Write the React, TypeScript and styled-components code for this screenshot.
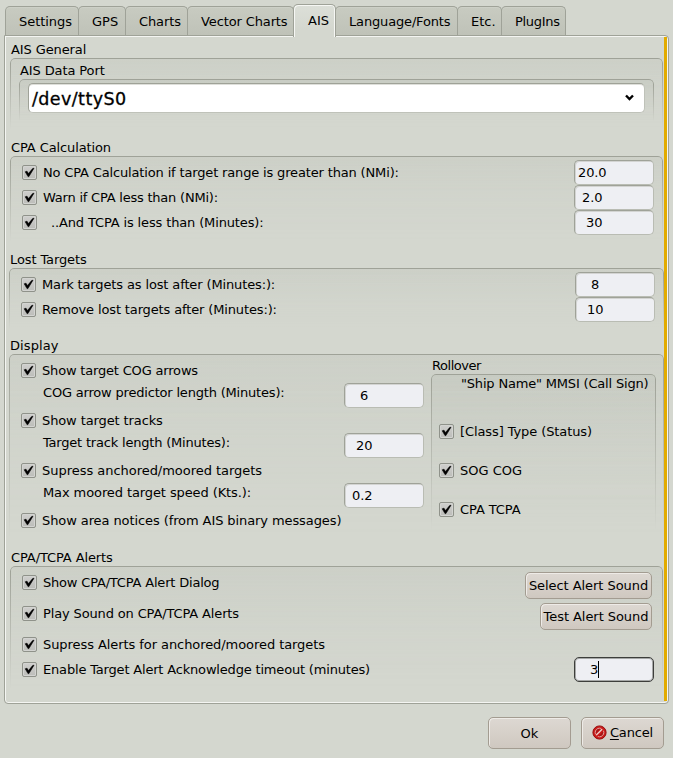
import React from "react";
import styled, { createGlobalStyle, css } from "styled-components";

const GlobalStyle = createGlobalStyle`
  * { box-sizing: border-box; }
  html, body { margin: 0; padding: 0; }
  body {
    width: 673px;
    height: 758px;
    overflow: hidden;
    background: #d4d7cf;
    color: #000;
    font: 13px/15px "DejaVu Sans", sans-serif;
    white-space: pre;
  }
`;

const Dialog = styled.div`
  display: flex;
  flex-direction: column;
  width: 673px;
  height: 758px;
  padding: 4px 4px 0;
`;

const TabBar = styled.div`
  display: flex;
  align-items: flex-end;
  height: 31px;
  padding-left: 1px;
`;

const Tab = styled.div<{ $width: number; $track?: number; $active?: boolean }>`
  width: ${(p) => p.$width}px;
  height: 29px;
  padding: 7px 0 0 13px;
  border: 1px solid #9fa298;
  border-bottom: 0;
  border-radius: 5px 5px 0 0;
  background: linear-gradient(#c8cbc1, #bfc2b8);
  margin-right: -1px;
  box-shadow: inset 0 1px 0 #cdd0c7;
  letter-spacing: ${(p) => p.$track ?? 0}px;
  ${(p) =>
    p.$active &&
    css`
      position: relative;
      height: 33px;
      margin-bottom: -2px;
      padding-top: 8px;
      padding-left: 14px;
      background: linear-gradient(#dcdfd8, #d4d7cf 80%);
      box-shadow: inset 1px 1px 0 #f6f7f4, inset -1px 0 0 #f6f7f4;
    `}
`;

const Panel = styled.div`
  display: flex;
  width: 665px;
  height: 669px;
  border: 1px solid #9fa298;
  border-radius: 0 4px 4px 4px;
  box-shadow: inset 0 0 0 1px #f4f5f2;
  padding: 1px;
`;

const Page = styled.div`
  width: 658px;
  padding-top: 5px;
`;

const ScrollEdge = styled.div`
  width: 3px;
  height: 664px;
  background: #e2ab00;
`;

const Group = styled.section<{ $height: number; $wide?: boolean }>`
  display: flex;
  flex-direction: column;
  height: ${(p) => p.$height}px;
  margin-left: ${(p) => (p.$wide ? 3 : 4)}px;
  width: ${(p) => (p.$wide ? 655 : 653)}px;
`;

const GroupTitle = styled.div<{ $track?: number }>`
  height: 16px;
  padding-left: 1px;
  letter-spacing: ${(p) => p.$track ?? -0.11}px;
`;

const Frame = styled.div<{ $fade: number }>`
  position: relative;
  z-index: 0;
  flex: 1;
  padding-top: 4px;
  &::before {
    content: "";
    position: absolute;
    z-index: -1;
    inset: 0 0 auto 0;
    height: ${(p) => p.$fade}px;
    border: 1px solid #9fa298;
    border-bottom: 0;
    border-radius: 5px 5px 0 0;
    background: linear-gradient(rgba(175, 180, 170, 0.19), rgba(175, 180, 170, 0.06));
    mask-image: linear-gradient(#000 0, #000 5px, transparent);
  }
`;

const PortGroup = styled.div`
  width: 635px;
  margin-left: 9px;
  padding-top: 1px;
`;

const Combo = styled.div`
  display: flex;
  align-items: center;
  justify-content: space-between;
  width: 617px;
  height: 30px;
  margin-left: 9px;
  padding: 2px 10px 0 3px;
  border: 1px solid #9fa298;
  border-right-color: #bfc2b9;
  border-bottom-color: #bfc2b9;
  border-radius: 5px;
  background: #fff;
  box-shadow: inset 0 1px 0 #dedfda;
  font-size: 17.5px;
  line-height: 20px;
  letter-spacing: 0.42px;
  -webkit-text-stroke: 0.3px #000;
  svg { margin-top: -3px; }
`;

const Row = styled.div<{ $height?: number }>`
  display: flex;
  align-items: flex-start;
  height: ${(p) => p.$height ?? 25}px;
  padding-left: 12px;
  padding-right: 9px;
`;

const CheckLabel = styled.label`
  display: flex;
  gap: 6px;
  padding-top: 5px;
  margin-right: auto;
`;

const Tracked = styled.span<{ $track: number }>`
  letter-spacing: ${(p) => p.$track}px;
`;

const Box = styled.span`
  display: block;
  width: 15px;
  height: 15px;
  border: 1px solid #8f928a;
  border-radius: 2px;
  background: linear-gradient(#cfcfcd, #bcbdb9);
  box-shadow: inset 0 0 0 1px #d3d4d1;
  svg { display: block; }
`;

const Field = styled.div<{ $focus?: boolean }>`
  display: flex;
  align-items: center;
  width: 80px;
  height: 25px;
  padding-left: 3px;
  border: 1px solid #9fa298;
  border-right-color: #b9bcb3;
  border-bottom-color: #b9bcb3;
  border-radius: 5px;
  background: #eeeff3;
  box-shadow: inset 1px 1px 0 #d3d4d2;
  letter-spacing: -0.1px;
  ${(p) =>
    p.$focus &&
    css`
      border-color: #3d3e3b;
      box-shadow: inset 0 0 0 1px #a6a8a7;
    `}
`;

const Caret = styled.span`
  width: 1px;
  height: 17px;
  background: #000;
`;

const DisplayColumns = styled.div`
  display: flex;
`;

const DisplayOptions = styled.div`
  width: 422px;
`;

const SubRow = styled.div`
  display: flex;
  justify-content: space-between;
  height: 25px;
  padding: 0 7px 0 34px;
`;

const SubLabel = styled(Tracked)`
  padding-top: 2px;
`;

const Rollover = styled.div`
  width: 225px;
`;

const RolloverFrame = styled(Frame)`
  height: 155px;
  padding-top: 2px;
`;

const RolloverHeading = styled.div`
  height: 43px;
  padding-left: 30px;
  letter-spacing: -0.18px;
`;

const RolloverRow = styled.div`
  height: 39px;
  padding-left: 8px;
`;

const Button = styled.button<{ $width: number; $height?: number }>`
  display: flex;
  align-items: center;
  justify-content: center;
  width: ${(p) => p.$width}px;
  height: ${(p) => p.$height ?? 27}px;
  padding: 0;
  border: 1px solid #a39c91;
  border-radius: 5px;
  background: linear-gradient(#ddd8d2, #cfc8c0);
  box-shadow: inset 1px 1px 0 #eeebe7;
  color: #000;
  font: inherit;
  white-space: pre;
`;

const AlertButton = styled(Button)`
  margin: 2px 2px 0 0;
  letter-spacing: -0.06px;
`;

const Footer = styled.div`
  display: flex;
  justify-content: flex-end;
  gap: 10px;
  padding: 13px 5px 0 0;
`;

const CancelButton = styled(Button)`
  gap: 3px;
  padding-bottom: 1px;
  letter-spacing: -0.15px;
`;

const OkButton = styled(Button)`
  padding-top: 1px;
`;

const Mnemonic = styled.span`
  text-decoration: underline;
  text-decoration-thickness: 1px;
  text-underline-offset: 2px;
`;

const tabs = [
  { name: "Settings", width: 74, track: -0.05 },
  { name: "GPS", width: 48 },
  { name: "Charts", width: 63, track: -0.1 },
  { name: "Vector Charts", width: 107, track: -0.12 },
  { name: "AIS", width: 43, active: true },
  { name: "Language/Fonts", width: 123, track: -0.16 },
  { name: "Etc.", width: 45 },
  { name: "PlugIns", width: 65, track: -0.3 },
];

function Check({ text, track = 0 }: { text: string; track?: number }) {
  return (
    <CheckLabel>
      <Box>
        <svg width="13" height="13" viewBox="0 0 13 13">
          <path d="M2.2 5.8 4 5.2 5.5 7.6 9.6 2.6 11 2.2 5.9 10.6 5 10.6Z" fill="#000" stroke="#000" strokeWidth=".6" />
        </svg>
      </Box>
      <Tracked $track={track}>{text}</Tracked>
    </CheckLabel>
  );
}

function ForbiddenIcon() {
  return (
    <svg width="15" height="15" viewBox="0 0 15 15">
      <circle cx="7.5" cy="7.5" r="6.6" fill="#cc1a1a" stroke="#960f0f" />
      <circle cx="7.5" cy="7.5" r="4.3" fill="#a81616" stroke="#e0a39f" strokeWidth="1" />
      <path d="M4.3 10.7 10.7 4.3" stroke="#cc1a1a" strokeWidth="3.4" />
      <path d="M4.2 10.1 10.1 4.2" stroke="#efd9d6" strokeWidth="1.3" />
    </svg>
  );
}

export default function App() {
  return (
    <Dialog>
      <GlobalStyle />
      <TabBar>
        {tabs.map((t) => (
          <Tab key={t.name} $width={t.width} $track={t.track} $active={t.active}>{t.name}</Tab>
        ))}
      </TabBar>
      <Panel>
        <Page>
          <Group $height={98}>
            <GroupTitle>AIS General</GroupTitle>
            <Frame $fade={70}>
              <PortGroup>
                <GroupTitle>AIS Data Port</GroupTitle>
                <Frame $fade={41}>
                  <Combo>
                    <span>/dev/ttyS0</span>
                    <svg width="9" height="7" viewBox="0 0 9 7">
                      <path d="M1 1.5 4.5 5 8 1.5" fill="none" stroke="#000" strokeWidth="2.4" />
                    </svg>
                  </Combo>
                </Frame>
              </PortGroup>
            </Frame>
          </Group>
          <Group $height={112}>
            <GroupTitle>CPA Calculation</GroupTitle>
            <Frame $fade={84}>
              <Row><Check track={-0.155} text="No CPA Calculation if target range is greater than (NMi):" /><Field>20.0</Field></Row>
              <Row><Check track={-0.22} text="Warn if CPA less than (NMi):" /><Field> 2.0</Field></Row>
              <Row><Check track={-0.14} text="  ..And TCPA is less than (Minutes):" /><Field>{"  30"}</Field></Row>
            </Frame>
          </Group>
          <Group $height={86} $wide>
            <GroupTitle>Lost Targets</GroupTitle>
            <Frame $fade={60}>
              <Row><Check track={-0.13} text="Mark targets as lost after (Minutes:):" /><Field>{"   8"}</Field></Row>
              <Row><Check track={-0.135} text="Remove lost targets after (Minutes:):" /><Field>{"  10"}</Field></Row>
            </Frame>
          </Group>
          <Group $height={212} $wide>
            <GroupTitle $track={0.1}>Display</GroupTitle>
            <Frame $fade={182}>
              <DisplayColumns>
                <DisplayOptions>
                  <Row><Check track={-0.18} text="Show target COG arrows" /></Row>
                  <SubRow><SubLabel $track={-0.19}>COG arrow predictor length (Minutes):</SubLabel><Field>{"   6"}</Field></SubRow>
                  <Row><Check track={-0.11} text="Show target tracks" /></Row>
                  <SubRow><SubLabel $track={-0.2}>Target track length (Minutes):</SubLabel><Field>{"  20"}</Field></SubRow>
                  <Row><Check track={-0.03} text="Supress anchored/moored targets" /></Row>
                  <SubRow><SubLabel $track={-0.1}>Max moored target speed (Kts.):</SubLabel><Field>{" 0.2"}</Field></SubRow>
                  <Row><Check track={-0.09} text="Show area notices (from AIS binary messages)" /></Row>
                </DisplayOptions>
                <Rollover>
                  <GroupTitle $track={-0.45}>Rollover</GroupTitle>
                  <RolloverFrame $fade={155}>
                    <RolloverHeading>"Ship Name" MMSI (Call Sign)</RolloverHeading>
                    <RolloverRow><Check track={-0.1} text="[Class] Type (Status)" /></RolloverRow>
                    <RolloverRow><Check text="SOG COG" /></RolloverRow>
                    <RolloverRow><Check track={-0.1} text="CPA TCPA" /></RolloverRow>
                  </RolloverFrame>
                </Rollover>
              </DisplayColumns>
            </Frame>
          </Group>
          <Group $height={145}>
            <GroupTitle>CPA/TCPA Alerts</GroupTitle>
            <Frame $fade={122}>
              <Row $height={31}><Check track={-0.19} text="Show CPA/TCPA Alert Dialog" /><AlertButton $width={127}>Select Alert Sound</AlertButton></Row>
              <Row $height={31}><Check track={-0.14} text="Play Sound on CPA/TCPA Alerts" /><AlertButton $width={112}>Test Alert Sound</AlertButton></Row>
              <Row><Check track={-0.07} text="Supress Alerts for anchored/moored targets" /></Row>
              <Row><Check track={-0.18} text="Enable Target Alert Acknowledge timeout (minutes)" /><Field $focus>{"   3"}<Caret /></Field></Row>
            </Frame>
          </Group>
        </Page>
        <ScrollEdge />
      </Panel>
      <Footer>
        <OkButton $width={83} $height={32}>Ok</OkButton>
        <CancelButton $width={83} $height={32}>
          <ForbiddenIcon />
          <span><Mnemonic>C</Mnemonic>ancel</span>
        </CancelButton>
      </Footer>
    </Dialog>
  );
}
